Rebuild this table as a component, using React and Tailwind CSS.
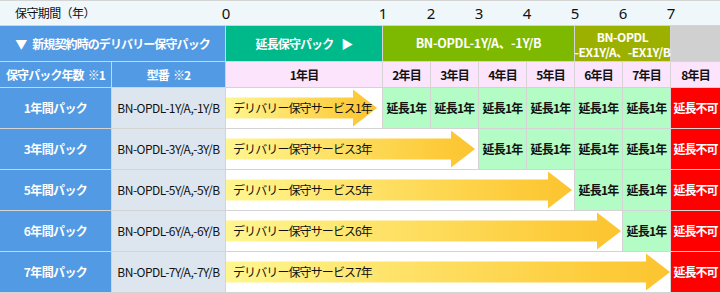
import React from "react";

const COLS = "grid-cols-[111px_113px_156px_47px_47px_47px_47px_47px_47px_49px]";

function Arrow({ width, tip, id, label }) {
  const H = 40;
  const headW = 24;
  const baseX = tip - headW;
  const pts = `0,9.5 ${baseX},9.5 ${baseX},1.5 ${tip},20 ${baseX},38.5 ${baseX},30.5 0,30.5`;
  return (
    <div className="relative bg-white flex items-center">
      <svg className="absolute left-0 top-0" width={width} height={H} viewBox={`0 0 ${width} ${H}`}>
        <defs>
          <linearGradient id={id} x1="0" y1="0" x2={tip} y2="0" gradientUnits="userSpaceOnUse">
            <stop offset="0" stopColor="#fff690" />
            <stop offset="0.85" stopColor="#fdcb3a" />
            <stop offset="1" stopColor="#fcc430" />
          </linearGradient>
        </defs>
        <polygon points={pts} fill={`url(#${id})`} />
      </svg>
      <span className="relative pl-[7px] text-[12px] tracking-[-0.9px] text-[#111] whitespace-nowrap">{label}</span>
    </div>
  );
}

function Ext() {
  return (
    <div className="bg-[#b3fcc6] flex items-center justify-center text-[12px] tracking-[-0.8px] font-bold text-[#111] whitespace-nowrap">
      延長1年
    </div>
  );
}

function NoExt() {
  return (
    <div className="bg-[#ff0000] flex items-center justify-center text-[12px] tracking-[-1px] font-bold text-white whitespace-nowrap">
      延長不可
    </div>
  );
}

const rows = [
  { name: "1年間パック", model: "BN-OPDL-1Y/A,-1Y/B", span: 1, w: 156, tip: 151, ext: 6 },
  { name: "3年間パック", model: "BN-OPDL-3Y/A,-3Y/B", span: 3, w: 252, tip: 249, ext: 4 },
  { name: "5年間パック", model: "BN-OPDL-5Y/A,-5Y/B", span: 5, w: 348, tip: 346, ext: 2 },
  { name: "6年間パック", model: "BN-OPDL-6Y/A,-6Y/B", span: 6, w: 396, tip: 395, ext: 1 },
  { name: "7年間パック", model: "BN-OPDL-7Y/A,-7Y/B", span: 7, w: 444, tip: 444, ext: 0 },
];

const spanCls = {
  1: "col-span-1",
  3: "col-span-3",
  5: "col-span-5",
  6: "col-span-6",
  7: "col-span-7",
};

export default function App() {
  return (
    <div
      className={`w-[720px] h-[293px] bg-[#d4d4d4] pt-px pb-px grid ${COLS} grid-rows-[24px_35px_25px_40px_40px_40px_40px_40px] gap-px font-['Noto_Sans_CJK_JP','Noto_Sans',sans-serif] leading-none`}
    >
      {/* scale row */}
      <div className={`col-span-10 bg-[#f0f7fb] grid ${COLS} gap-x-px items-center`}>
        <div className="col-span-2 pl-[15px] text-[12px] tracking-[-0.6px] text-[#111]">保守期間（年）</div>
        {[0, 1, 2, 3, 4, 5, 6, 7].map((n) => (
          <span
            key={n}
            className="justify-self-start -translate-x-1/2 text-[15px] text-[#111] font-['Noto_Sans',sans-serif]"
          >
            {n}
          </span>
        ))}
      </div>

      {/* header row */}
      <div className="col-span-2 bg-[#529ae4] flex items-center justify-center text-white font-bold text-[12px] tracking-[-0.9px] whitespace-nowrap">
        <span className="mr-[6px]">▼</span>新規契約時のデリバリー保守パック
      </div>
      <div className="bg-[#00b98b] flex items-center justify-center text-white font-bold text-[12px] tracking-[-0.9px] whitespace-nowrap">
        延長保守パック<span className="ml-[8px]">▶</span>
      </div>
      <div className="col-span-4 bg-[#7cb900] flex items-center justify-center text-white font-bold text-[12.5px] tracking-[-0.3px] whitespace-nowrap">
        BN-OPDL-1Y/A、-1Y/B
      </div>
      <div className="col-span-2 bg-[#9cb000] flex flex-col items-center justify-center text-white font-bold text-[12px] tracking-[-0.4px] leading-[15px] whitespace-nowrap">
        <span>BN-OPDL</span>
        <span>-EX1Y/A、-EX1Y/B</span>
      </div>
      <div className="bg-[#d0d0d0]" />

      {/* column titles */}
      <div className="bg-[#529ae4] flex items-center justify-center text-white font-bold text-[12px] tracking-[-0.9px] whitespace-nowrap">
        保守パック年数<span className="ml-[4px]">※1</span>
      </div>
      <div className="bg-[#529ae4] flex items-center justify-center text-white font-bold text-[12px] tracking-[-0.9px] whitespace-nowrap">
        型番<span className="ml-[4px]">※2</span>
      </div>
      {["1年目", "2年目", "3年目", "4年目", "5年目", "6年目", "7年目", "8年目"].map((t) => (
        <div
          key={t}
          className="bg-[#fce4fc] flex items-center justify-center text-[#111] font-bold text-[12px] tracking-[-0.8px] whitespace-nowrap"
        >
          {t}
        </div>
      ))}

      {/* body rows */}
      {rows.map((r, i) => (
        <React.Fragment key={r.name}>
          <div className="bg-[#529ae4] flex items-center justify-center text-white font-bold text-[12px] tracking-[-0.6px] whitespace-nowrap">
            {r.name}
          </div>
          <div className="bg-[#dde6ef] flex items-center justify-center text-[#111] text-[12px] tracking-[-0.5px] whitespace-nowrap">
            {r.model}
          </div>
          <div className={`${spanCls[r.span]} grid`}>
            <Arrow width={r.w} tip={r.tip} id={`g${i}`} label={`デリバリー保守サービス${r.span}年`} />
          </div>
          {Array.from({ length: r.ext }).map((_, k) => (
            <Ext key={k} />
          ))}
          <NoExt />
        </React.Fragment>
      ))}
    </div>
  );
}
